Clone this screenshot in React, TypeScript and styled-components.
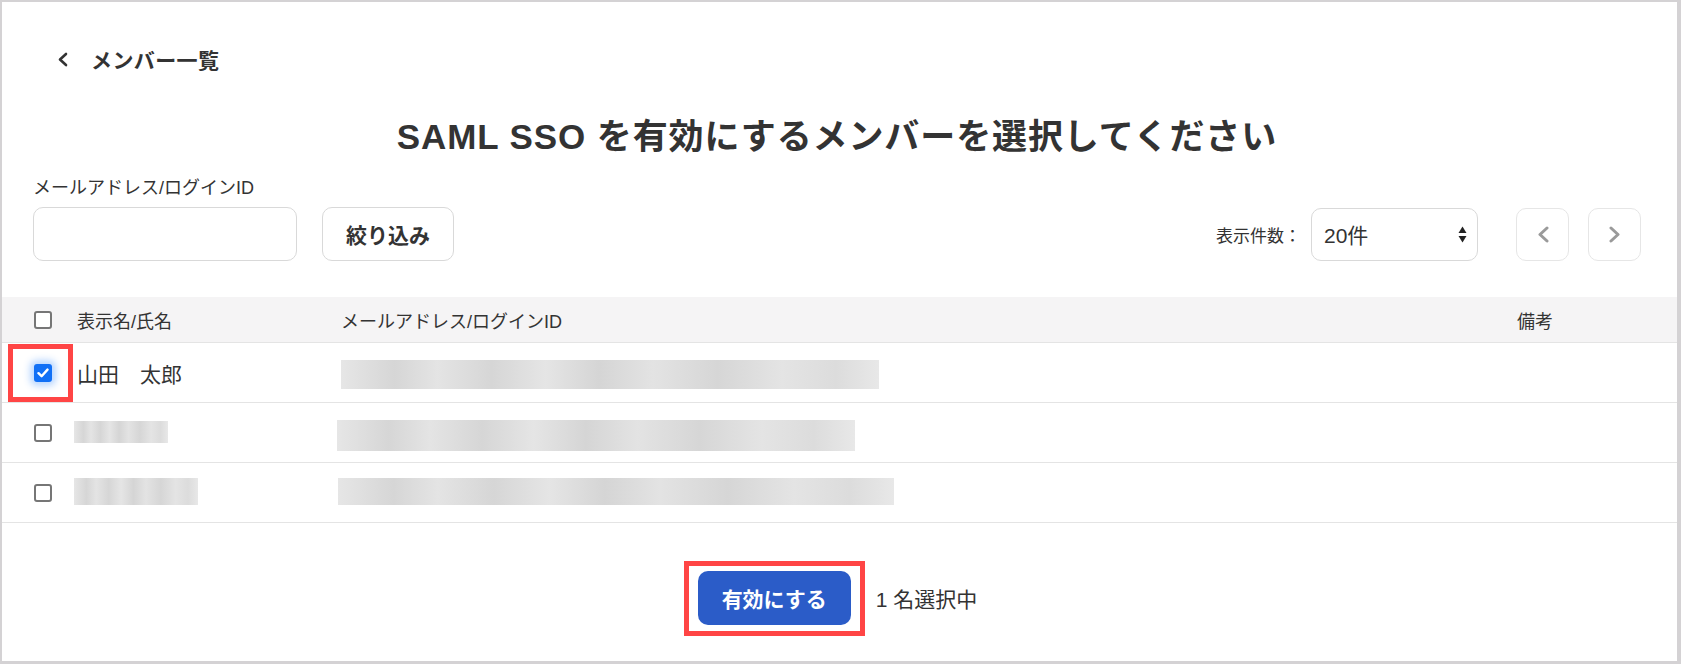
import React from "react";
import styled, { createGlobalStyle, css } from "styled-components";

const Global = createGlobalStyle`
  html, body { margin: 0; padding: 0; background: #fff; }
  body {
    font-family: "Liberation Sans", "Noto Sans CJK JP", sans-serif;
    color: #333;
    overflow: hidden;
  }
  * { box-sizing: border-box; }
`;

const Frame = styled.div`
  width: 1681px;
  height: 664px;
  border: 2px solid #d4d2d4;
  border-right-width: 4px;
  border-bottom-width: 3px;
  display: flex;
  flex-direction: column;
  background: #fff;
`;

const Top = styled.div`
  padding: 42px 36px 0 31px;
  display: flex;
  flex-direction: column;
`;

const BackLink = styled.a`
  display: flex;
  align-items: center;
  gap: 23px;
  height: 30px;
  padding-left: 24px;
  font-size: 21px;
  letter-spacing: 0.4px;
  font-weight: 700;
  color: #333;
  text-decoration: none;
`;

const Title = styled.h1`
  margin: 43px 0 0;
  height: 40px;
  line-height: 40px;
  text-align: center;
  font-size: 35px;
  letter-spacing: 0.9px;
  font-weight: 700;
  color: #333;
`;

const Controls = styled.div`
  margin-top: 20px;
  display: flex;
  justify-content: space-between;
  align-items: flex-end;
`;

const FilterGroup = styled.div`
  display: flex;
  flex-direction: column;
  gap: 8px;
`;

const Label = styled.label`
  font-size: 18px;
  line-height: 22px;
  color: #333;
`;

const InputRow = styled.div`
  display: flex;
  gap: 25px;
`;

const TextInput = styled.input`
  width: 264px;
  height: 54px;
  border: 1px solid #d9d9d9;
  border-radius: 10px;
  background: #fff;
  outline: none;
`;

const OutlineButton = styled.button`
  width: 132px;
  height: 54px;
  border: 1px solid #d9d9d9;
  border-radius: 10px;
  background: #fff;
  font-family: inherit;
  font-size: 21px;
  font-weight: 700;
  color: #333;
`;

const Pager = styled.div`
  display: flex;
  align-items: center;
  height: 54px;
`;

const PagerLabel = styled.span`
  font-size: 17px;
  color: #333;
  margin-right: 10px;
`;

const SelectBox = styled.div`
  width: 167px;
  height: 53px;
  border: 1px solid #d9d9d9;
  border-radius: 10px;
  display: flex;
  align-items: center;
  justify-content: space-between;
  padding: 0 10px 0 12px;
  font-size: 21px;
  color: #333;
  margin-right: 38px;
`;

const NavButton = styled.button<{ $last?: boolean }>`
  width: 53px;
  height: 53px;
  border: 1px solid #e6e6e6;
  border-radius: 10px;
  background: #fff;
  display: flex;
  align-items: center;
  justify-content: center;
  padding: 0;
  margin-right: ${(p) => (p.$last ? "0" : "19px")};
`;

const Table = styled.div`
  margin-top: 36px;
  display: flex;
  flex-direction: column;
`;

const Row = styled.div<{ $head?: boolean }>`
  display: grid;
  grid-template-columns: 75px 264px 1176px 1fr;
  align-items: center;
  border-bottom: 1px solid #e4e4e4;
  ${(p) =>
    p.$head
      ? css`
          height: 46px;
          background: #f5f4f5;
          font-size: 18px;
        `
      : css`
          height: 60px;
          font-size: 21px;
        `}
`;

const CheckCell = styled.div`
  position: relative;
  height: 100%;
  display: flex;
  align-items: center;
  padding-left: 32px;
`;

const Cell = styled.div`
  display: flex;
  align-items: center;
  color: #333;
`;

const Box = styled.span<{ $checked?: boolean }>`
  width: 18px;
  height: 18px;
  border-radius: 3px;
  display: flex;
  align-items: center;
  justify-content: center;
  ${(p) =>
    p.$checked
      ? css`
          background: #1170f6;
          box-shadow: 0 0 7px 4px rgba(40, 130, 255, 0.32);
        `
      : css`
          background: #fff;
          border: 2px solid #767676;
        `}
`;

const Annotation = styled.span<{ $inset: string }>`
  position: absolute;
  inset: ${(p) => p.$inset};
  border: 5px solid #ff4545;
  pointer-events: none;
`;

const Blur = styled.span<{ $w: number; $h: number; $dx?: number; $dy?: number }>`
  display: block;
  width: ${(p) => p.$w}px;
  height: ${(p) => p.$h}px;
  margin-left: ${(p) => p.$dx ?? 0}px;
  margin-top: ${(p) => p.$dy ?? 0}px;
  background: linear-gradient(
    90deg,
    #e6e6e6 0%,
    #d6d6d6 10%,
    #e4e4e4 18%,
    #d6d6d6 28%,
    #e5e5e5 38%,
    #d5d5d5 48%,
    #e3e3e3 58%,
    #d6d6d6 70%,
    #e4e4e4 82%,
    #dcdcdc 92%,
    #e8e8e8 100%
  );
`;

const Footer = styled.div`
  margin-top: 48px;
  display: flex;
  justify-content: center;
  align-items: center;
  gap: 25px;
  padding-right: 4px;
`;

const Highlight = styled.span`
  position: relative;
  display: inline-flex;
`;

const PrimaryButton = styled.button`
  width: 153px;
  height: 54px;
  border: none;
  border-radius: 10px;
  background: #2b5cc8;
  color: #fff;
  font-family: inherit;
  font-size: 21px;
  font-weight: 700;
`;

const Count = styled.span`
  font-size: 21px;
  color: #333;
`;

const Check = () => (
  <svg width="12" height="10" viewBox="0 0 12 10">
    <path d="M1.5 5.2 L4.6 8.2 L10.5 1.6" fill="none" stroke="#fff" strokeWidth="2.4" strokeLinecap="round" strokeLinejoin="round" />
  </svg>
);

const Chevron = ({ dir, color, w, h, sw }: { dir: "l" | "r"; color: string; w: number; h: number; sw: number }) => (
  <svg width={w} height={h} viewBox={`0 0 ${w} ${h}`}>
    <path
      d={dir === "l" ? `M${w - 2} 2 L3 ${h / 2} L${w - 2} ${h - 2}` : `M2 2 L${w - 3} ${h / 2} L2 ${h - 2}`}
      fill="none"
      stroke={color}
      strokeWidth={sw}
      strokeLinecap="round"
      strokeLinejoin="round"
    />
  </svg>
);

const SortArrows = () => (
  <svg width="9" height="17" viewBox="0 0 9 17">
    <path d="M4.5 0.5 L8.5 7 L0.5 7 Z" fill="#222" />
    <path d="M4.5 16.5 L8.5 10 L0.5 10 Z" fill="#222" />
  </svg>
);

export default function App() {
  return (
    <>
      <Global />
      <Frame>
        <Top>
          <BackLink href="#">
            <Chevron dir="l" color="#333" w={11} h={15} sw={2.6} />
            <span>メンバー一覧</span>
          </BackLink>
          <Title>SAML SSO を有効にするメンバーを選択してください</Title>
          <Controls>
            <FilterGroup>
              <Label>メールアドレス/ログインID</Label>
              <InputRow>
                <TextInput />
                <OutlineButton>絞り込み</OutlineButton>
              </InputRow>
            </FilterGroup>
            <Pager>
              <PagerLabel>表示件数：</PagerLabel>
              <SelectBox>
                <span>20件</span>
                <SortArrows />
              </SelectBox>
              <NavButton>
                <Chevron dir="l" color="#9a9a9a" w={12} h={17} sw={3} />
              </NavButton>
              <NavButton $last>
                <Chevron dir="r" color="#9a9a9a" w={12} h={17} sw={3} />
              </NavButton>
            </Pager>
          </Controls>
        </Top>

        <Table>
          <Row $head>
            <CheckCell>
              <Box />
            </CheckCell>
            <Cell>表示名/氏名</Cell>
            <Cell>メールアドレス/ログインID</Cell>
            <Cell>備考</Cell>
          </Row>
          <Row>
            <CheckCell>
              <Box $checked>
                <Check />
              </Box>
              <Annotation $inset="1px 4px 0px 6px" />
            </CheckCell>
            <Cell>山田　太郎</Cell>
            <Cell>
              <Blur $w={538} $h={29} $dy={4} />
            </Cell>
            <Cell />
          </Row>
          <Row>
            <CheckCell>
              <Box />
            </CheckCell>
            <Cell>
              <Blur $w={94} $h={22} $dx={-3} $dy={-2} />
            </Cell>
            <Cell>
              <Blur $w={518} $h={31} $dx={-4} $dy={6} />
            </Cell>
            <Cell />
          </Row>
          <Row>
            <CheckCell>
              <Box />
            </CheckCell>
            <Cell>
              <Blur $w={124} $h={27} $dx={-3} $dy={-2} />
            </Cell>
            <Cell>
              <Blur $w={556} $h={27} $dx={-3} $dy={-2} />
            </Cell>
            <Cell />
          </Row>
        </Table>

        <Footer>
          <Highlight>
            <PrimaryButton>有効にする</PrimaryButton>
            <Annotation $inset="-10px -14px -11px -14px" />
          </Highlight>
          <Count>1 名選択中</Count>
        </Footer>
      </Frame>
    </>
  );
}
